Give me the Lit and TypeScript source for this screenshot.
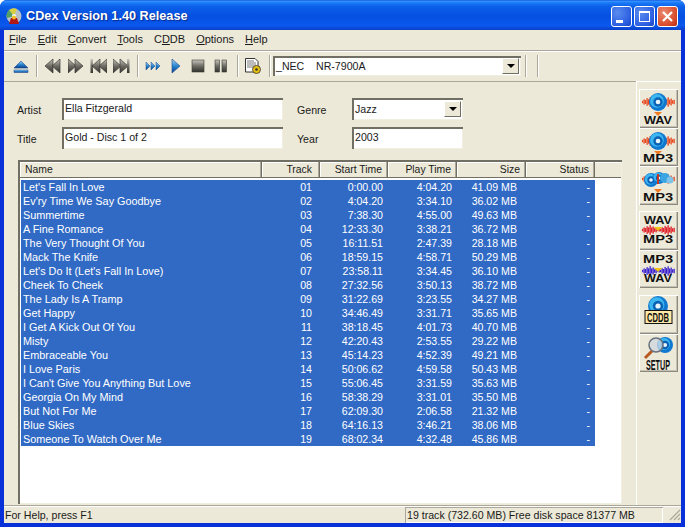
import { LitElement, html, css, svg } from "lit";
import { customElement } from "lit/decorators.js";

const TRACKS: [string, string, string, string, string][] = [
  ["Let's Fall In Love", "01", "0:00.00", "4:04.20", "41.09 MB"],
  ["Ev'ry Time We Say Goodbye", "02", "4:04.20", "3:34.10", "36.02 MB"],
  ["Summertime", "03", "7:38.30", "4:55.00", "49.63 MB"],
  ["A Fine Romance", "04", "12:33.30", "3:38.21", "36.72 MB"],
  ["The Very Thought Of You", "05", "16:11.51", "2:47.39", "28.18 MB"],
  ["Mack The Knife", "06", "18:59.15", "4:58.71", "50.29 MB"],
  ["Let's Do It (Let's Fall In Love)", "07", "23:58.11", "3:34.45", "36.10 MB"],
  ["Cheek To Cheek", "08", "27:32.56", "3:50.13", "38.72 MB"],
  ["The Lady Is A Tramp", "09", "31:22.69", "3:23.55", "34.27 MB"],
  ["Get Happy", "10", "34:46.49", "3:31.71", "35.65 MB"],
  ["I Get A Kick Out Of You", "11", "38:18.45", "4:01.73", "40.70 MB"],
  ["Misty", "12", "42:20.43", "2:53.55", "29.22 MB"],
  ["Embraceable You", "13", "45:14.23", "4:52.39", "49.21 MB"],
  ["I Love Paris", "14", "50:06.62", "4:59.58", "50.43 MB"],
  ["I Can't Give You Anything But Love", "15", "55:06.45", "3:31.59", "35.63 MB"],
  ["Georgia On My Mind", "16", "58:38.29", "3:31.01", "35.50 MB"],
  ["But Not For Me", "17", "62:09.30", "2:06.58", "21.32 MB"],
  ["Blue Skies", "18", "64:16.13", "3:46.21", "38.06 MB"],
  ["Someone To Watch Over Me", "19", "68:02.34", "4:32.48", "45.86 MB"],
];

const disc = (cx: number, cy: number, r: number) => svg`
  <circle cx=${cx} cy=${cy} r=${r} fill="#0f78d0"/>
  <circle cx=${cx - r * 0.12} cy=${cy - r * 0.12} r=${r * 0.76} fill="#3cb6f0"/>
  <circle cx=${cx} cy=${cy} r=${r * 0.52} fill="#0a62b4"/>
  <circle cx=${cx} cy=${cy} r=${r * 0.26} fill="#eaf6fd"/>`;

const waves = (cy: number, color: string, x0 = 3, x1 = 35, gap = 0) => {
  const out = [];
  const mid = (x0 + x1) / 2;
  const half = (x1 - x0) / 2;
  let i = 0;
  for (let x = x0; x <= x1; x += 1.5, i++) {
    if (gap && Math.abs(x - mid) < gap) continue;
    const env = 2 + 8 * (1 - Math.abs(Math.abs(x - mid) - half * 0.55) / (half * 0.6));
    const h = Math.max(1.5, env * (i % 2 ? 1 : 0.6));
    out.push(svg`<rect x=${x} y=${cy - h / 2} width="1.3" height=${h} fill=${color}/>`);
  }
  return out;
};

const label = (t: string, y: number, x = 5, w = 28, size = 10) => svg`
  <text class="ic" x=${x} y=${y} textLength=${w} lengthAdjust="spacingAndGlyphs" font-size=${size}>${t}</text>`;

const tall = (t: string, x: number, y: number, sx: number, sy: number) => svg`
  <text class="ic" font-size="10" transform="translate(${x} ${y}) scale(${sx} ${sy})">${t}</text>`;

const tri = (x: number, y: number, color: string) =>
  svg`<path d="M${x - 4} ${y}h8l-4 4z" fill=${color}/>`;

const sideIcons = [
  svg`${waves(13, "#e8481f", 3, 35, 8)}${disc(19, 13, 9)}${tri(19, 23, "#f07a20")}${label("WAV", 35)}`,
  svg`${waves(13, "#e8481f", 3, 35, 8)}${disc(19, 13, 9)}${tri(19, 23, "#f07a20")}${label("MP3", 34, 4, 30)}`,
  svg`${waves(13, "#e8481f", 3, 35, 8)}${disc(12, 14, 7)}${disc(20, 12, 6)}
      <circle cx="26" cy="12" r="5" fill="#3aa5e0"/><circle cx="31" cy="14" r="3.5" fill="#7fc4ea"/>
      <rect x="18" y="8" width="2" height="10" fill="#c83a20"/>${tri(19, 23, "#f07a20")}${label("MP3", 35, 4, 30)}`,
  svg`${label("WAV", 13)}${waves(19, "#e0202a")}${tri(19, 16, "#f2c010")}${label("MP3", 32, 4, 30)}`,
  svg`${label("MP3", 13, 4, 30)}${waves(21, "#3a22d0")}${tri(19, 18, "#f2c010")}${label("WAV", 32)}`,
  svg`${disc(19, 11, 10)}<rect x="6" y="15.5" width="27" height="13" fill="#ffe9a4" stroke="#111" stroke-width="1"/>
      ${tall("CDDB", 8, 26.5, 0.76, 1.3)}`,
  svg`${disc(26, 11, 8)}<line x1="13" y1="17" x2="6" y2="24" stroke="#b85a20" stroke-width="3"/>
      <circle cx="17" cy="11" r="7" fill="#cfd6e0" fill-opacity=".75" stroke="#68707c" stroke-width="1.5"/>
      ${tall("SETUP", 7, 36, 0.72, 1.4)}`,
];

const grayDefs = svg`<defs>
  <linearGradient id="g" x1="0" y1="0" x2="0" y2="1"><stop offset="0" stop-color="#c8c6bc"/><stop offset=".5" stop-color="#6e6c64"/><stop offset="1" stop-color="#33322e"/></linearGradient>
  <linearGradient id="b" x1="0" y1="0" x2="0" y2="1"><stop offset="0" stop-color="#a8d8f4"/><stop offset=".5" stop-color="#2a86d0"/><stop offset="1" stop-color="#0a3c86"/></linearGradient>
</defs>`;

const tb = (w: number, body: unknown) => html`<svg width=${w} height="16" viewBox="0 0 ${w} 16" class="tbi">${grayDefs}${body}</svg>`;
const triL = (x: number) => svg`<path d="M${x} 8L${x + 8} 1V15Z" fill="url(#g)" stroke="#3a3a36" stroke-width=".7"/>`;
const triR = (x: number) => svg`<path d="M${x + 8} 8L${x} 1V15Z" fill="url(#g)" stroke="#3a3a36" stroke-width=".7"/>`;

@customElement("app-root")
export class AppRoot extends LitElement {
  static styles = css`
    :host { display: block; width: 685px; height: 527px; overflow: hidden; font-family: "Liberation Sans", Arial, sans-serif; font-size: 10.6px; color: #1a1a1a; }
    .win { width: 685px; height: 527px; display: flex; flex-direction: column; background: #0831d9; border-radius: 7px 7px 0 0; overflow: hidden; }
    .title { height: 30px; flex: none; box-sizing: border-box; display: flex; align-items: center; padding: 2px 7px 0 6px;
      background: linear-gradient(#0a58e0 0, #3a93ff 4%, #1a7cf8 9%, #0b5fe8 22%, #0650e2 55%, #0a58ee 85%, #0a40c8 100%); }
    .title-text { color: #fff; font-weight: 700; font-size: 12.7px; margin-left: 4px; flex: 1; text-shadow: 1px 1px 1px #0a2a8a; }
    .wb { width: 21px; height: 21px; margin-left: 2px; box-sizing: border-box; border: 1px solid #fff; border-radius: 3px; background: radial-gradient(circle at 30% 30%, #5a8cf0, #2a5ee0 70%, #1a40c0); display: flex; }
    .wb.close { background: radial-gradient(circle at 30% 30%, #ea8a70, #d84a28 70%, #b02a10); }
    .wb svg { display: block; }
    .client { flex: 1; margin: 0 4px 4px; min-height: 0; background: #ece9d8; display: flex; flex-direction: column; }
    .menu { height: 20px; flex: none; box-sizing: border-box; display: flex; align-items: center; padding: 0 0 2px 5px; gap: 11px; font-size: 11px; }
    .menu u { text-underline-offset: 1px; }
    .toolbar { height: 31px; flex: none; box-sizing: border-box; border-top: 1px solid #aca899; box-shadow: inset 0 1px 0 #fff; display: flex; align-items: center; padding: 0 0 0 9px; }
    .tbi { display: block; flex: none; }
    .sep { width: 1px; height: 22px; background: #aca899; border-right: 1px solid #fff; flex: none; }
    .m2 { margin-right: 2px; } .m4 { margin-right: 4px; } .m5 { margin-right: 5px; } .m6 { margin-right: 6px; } .m7 { margin-right: 7px; } .m9 { margin-right: 9px; } .m10 { margin-right: 10px; }
    .combo { width: 248px; height: 20px; box-sizing: border-box; background: #fff; box-shadow: inset 1px 1px 0 #716f64, inset 2px 2px 0 #716f64, inset -1px -1px 0 #f1efe2; display: flex; align-items: center; padding-left: 3px; flex: none; white-space: pre; }
    .combo span, .gval { flex: 1; }
    .arrow { width: 17px; height: 16px; margin-right: 2px; box-sizing: border-box; background: #ece9d8; border: 1px solid; border-color: #fff #716f64 #716f64 #fff; display: flex; align-items: center; justify-content: center; flex: none; }
    .arrow i { width: 0; height: 0; border: 4px solid transparent; border-top: 4px solid #000; border-bottom: 0; }
    .main { flex: 1; min-height: 0; display: flex; }
    .left { width: 632px; flex: none; box-sizing: border-box; border-top: 1px solid #aca899; padding: 16px 0 0 13px; }
    .form { display: grid; grid-template-columns: 45px 221px 69px 111px; grid-template-rows: 22px 22px; row-gap: 7px; align-items: center; }
    .lab2 { padding-left: 14px; }
    .lab { padding-top: 2px; }
    .inp { height: 100%; box-sizing: border-box; background: #fff; box-shadow: inset 1px 1px 0 #716f64, inset 2px 2px 0 #716f64, inset -1px -1px 0 #f1efe2; padding: 3px 3px 0; line-height: 14px; display: flex; }
    .sel { height: 22px; align-items: center; padding: 0 0 0 3px; }
    .list { margin: 11px 0 0 1px; width: 604px; height: 344px; box-sizing: border-box; background: #fff; box-shadow: inset 1px 1px 0 #716f64, inset 2px 2px 0 #716f64, inset -1px -1px 0 #f1efe2; padding: 2px 1px 0 2px; display: flex; flex-direction: column; }
    .head { display: flex; height: 16px; background: #ece9d8; flex: none; border-bottom: 1px solid #716f64; box-sizing: border-box; }
    .hc { box-sizing: border-box; height: 100%; text-align: right; padding-right: 5px; border-right: 1px solid #716f64; box-shadow: inset -1px 0 0 #aca899, inset 1px 1px 0 #fff; line-height: 15px; white-space: nowrap; flex: none; font-size: 10.4px; }
    .hc.name { text-align: left; padding-left: 5px; width: 242px; }
    .hc.w58 { width: 58px; padding-right: 7px; } .hc.w68 { width: 68px; } .hc.w69 { width: 69px; }
    .hc.fill { flex: 1; border-right: 0; box-shadow: inset 0 1px 0 #fff; }
    .rows { margin: 2px 0 0 1px; width: 574px; background: #316ac5; color: #fff; }
    .row { display: grid; grid-template-columns: 241px 58px 68px 69px 69px 69px; height: 14px; line-height: 14px; }
    .row div { text-align: right; padding-right: 5px; white-space: nowrap; }
    .row .n { text-align: left; padding: 0 0 0 2px; font-size: 10.85px; }
    .row .t { padding-right: 8px; }
    .row .s { padding-right: 9px; }
    .side { flex: 1; box-sizing: border-box; border-top: 1px solid #fff; border-left: 1px solid #fff; padding: 7px 0 0 2px; display: flex; flex-direction: column; }
    .g3 { height: 116px; width: 39px; display: flex; flex-direction: column; margin-bottom: 6px; }
    .g2 { height: 77px; width: 39px; display: flex; flex-direction: column; margin-bottom: 7px; }
    .btn { flex: 1; box-sizing: border-box; background: #ece9d8; box-shadow: inset 1px 1px 0 #fff, inset -1px -1px 0 #8c8a80, inset -2px -2px 0 #c4c1b2; }
    .btn svg { display: block; }
    .btn text.ic { font-family: "Liberation Sans", sans-serif; font-weight: 700; fill: #111; }
    .status { height: 18px; flex: none; display: flex; box-sizing: border-box; border-top: 1px solid #aca899; box-shadow: inset 0 1px 0 #fff; padding-top: 1px; line-height: 16px; }
    .p1 { width: 399px; flex: none; padding-left: 1px; box-sizing: border-box; }
    .p2 { width: 258px; flex: none; padding-left: 2px; box-sizing: border-box; box-shadow: inset 1px 1px 0 #aca899, inset -1px -1px 0 #fff; white-space: nowrap; margin-left: 2px; }
    .grip { flex: 1; }
    .grip svg { display: block; margin-left: auto; }
  `;

  render() {
    return html`<div class="win">
      <div class="title">
        <svg width="16" height="17" viewBox="0 0 16 17"><circle cx="8" cy="8" r="7.5" fill="#b9c0c6"/><path d="M8 8L3 2A7.5 7.5 0 0 1 11 1Z" fill="#d8d040"/><path d="M8 8L1 10A7.5 7.5 0 0 1 3 2Z" fill="#55a060"/><circle cx="8" cy="8" r="2" fill="#fff"/><path d="M5 10h6l2 6H3z" fill="#b01818"/><circle cx="8" cy="9.5" r="2" fill="#f0c020"/></svg>
        <div class="title-text">CDex Version 1.40 Release</div>
        <div class="wb"><svg width="19" height="19"><rect x="4" y="13" width="7" height="3" fill="#fff"/></svg></div>
        <div class="wb"><svg width="19" height="19"><rect x="4.5" y="4.5" width="10" height="10" fill="none" stroke="#fff"/><rect x="4" y="4" width="11" height="2" fill="#fff"/></svg></div>
        <div class="wb close"><svg width="19" height="19"><path d="M5 5L14 14M14 5L5 14" stroke="#fff" stroke-width="2.2"/></svg></div>
      </div>
      <div class="client">
        <div class="menu">
          <span><u>F</u>ile</span><span><u>E</u>dit</span><span><u>C</u>onvert</span><span><u>T</u>ools</span><span>C<u>D</u>DB</span><span><u>O</u>ptions</span><span><u>H</u>elp</span>
        </div>
        <div class="toolbar">
          <div class="m7">${tb(16, svg`<path d="M8 3L15 10H1Z" fill="url(#b)" stroke="#1a4a90" stroke-width=".6"/><rect x="1" y="12" width="14" height="2.5" fill="url(#b)" stroke="#1a4a90" stroke-width=".5"/>`)}</div>
          <div class="sep m7"></div>
          <div class="m7">${tb(16, svg`${triL(0)}${triL(7)}`)}</div>
          <div class="m6">${tb(16, svg`${triR(0)}${triR(7)}`)}</div>
          <div class="m6">${tb(17, svg`<rect x="0.5" y="1" width="2.5" height="14" fill="url(#g)"/>${triL(2)}${triL(9)}`)}</div>
          <div class="m7">${tb(17, svg`${triR(0)}${triR(7)}<rect x="14" y="1" width="2.5" height="14" fill="url(#g)"/>`)}</div>
          <div class="sep m6"></div>
          <div class="m9">${tb(16, svg`<g fill="url(#b)" stroke="#1a4a90" stroke-width=".5"><path d="M1 4L5 8L1 12Z"/><path d="M6 4L10 8L6 12Z"/><path d="M11 4L15 8L11 12Z"/></g>`)}</div>
          <div class="m7">${tb(14, svg`<path d="M2 1L10 8L2 15Z" fill="url(#b)" stroke="#1a4a90" stroke-width=".6"/>`)}</div>
          <div class="m9">${tb(14, svg`<rect x="1" y="2" width="12" height="12" fill="url(#g)" stroke="#3a3a36" stroke-width=".6"/>`)}</div>
          <div class="m9">${tb(14, svg`<rect x="1" y="2" width="4.5" height="12" fill="url(#g)" stroke="#3a3a36" stroke-width=".6"/><rect x="8" y="2" width="4.5" height="12" fill="url(#g)" stroke="#3a3a36" stroke-width=".6"/>`)}</div>
          <div class="sep m5"></div>
          <div class="m7">${tb(18, svg`<path d="M1.5 .5H11L14 3.5V14H1.5Z" fill="#fff" stroke="#333"/><path d="M3 3h7M3 5h9M3 7h9M3 9h6" stroke="#555" stroke-width=".8"/><circle cx="12.5" cy="11.5" r="4" fill="#e8c010" stroke="#333" stroke-width=".8"/><circle cx="12.5" cy="11.5" r="1.3" fill="#333"/>`)}</div>
          <div class="sep m2"></div>
          <div class="combo m4"><span>_NEC    NR-7900A</span><div class="arrow"><i></i></div></div>
          <div class="sep m10"></div>
          <div class="sep"></div>
        </div>
        <div class="main">
          <div class="left">
            <div class="form">
              <div class="lab">Artist</div><div class="inp">Ella Fitzgerald</div>
              <div class="lab lab2">Genre</div><div class="inp sel"><span class="gval">Jazz</span><div class="arrow"><i></i></div></div>
              <div class="lab">Title</div><div class="inp">Gold - Disc 1 of 2</div>
              <div class="lab lab2">Year</div><div class="inp">2003</div>
            </div>
            <div class="list">
              <div class="head">
                <div class="hc name">Name</div><div class="hc w58">Track</div><div class="hc w68">Start Time</div><div class="hc w69">Play Time</div><div class="hc w69">Size</div><div class="hc w69">Status</div><div class="hc fill"></div>
              </div>
              <div class="rows">
                ${TRACKS.map((r) => html`<div class="row"><div class="n">${r[0]}</div><div class="t">${r[1]}</div><div>${r[2]}</div><div>${r[3]}</div><div class="s">${r[4]}</div><div>-</div></div>`)}
              </div>
            </div>
          </div>
          <div class="side">
            <div class="g3">${sideIcons.slice(0, 3).map((i) => html`<div class="btn"><svg width="39" height="38" viewBox="0 0 39 38">${i}</svg></div>`)}</div>
            <div class="g2">${sideIcons.slice(3, 5).map((i) => html`<div class="btn"><svg width="39" height="38" viewBox="0 0 39 38">${i}</svg></div>`)}</div>
            <div class="g2">${sideIcons.slice(5, 7).map((i) => html`<div class="btn"><svg width="39" height="38" viewBox="0 0 39 38">${i}</svg></div>`)}</div>
          </div>
        </div>
        <div class="status">
          <div class="p1">For Help, press F1</div>
          <div class="p2">19 track (732.60 MB) Free disk space 81377 MB</div>
          <div class="grip"><svg width="14" height="16"><path d="M13 3L3 13M13 7L7 13M13 11L11 13" stroke="#aca899" stroke-width="1.2"/></svg></div>
        </div>
      </div>
    </div>`;
  }
}
